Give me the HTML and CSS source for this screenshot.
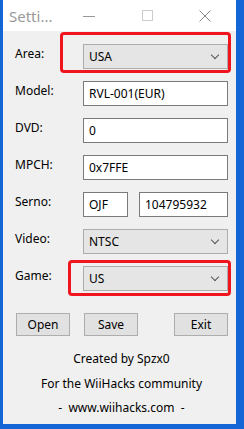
FILE: index.html
```html
<!DOCTYPE html>
<html lang="en">
<head>
  <meta charset="UTF-8">
  <title>Settings</title>
  <link rel="stylesheet" href="styles.css">
</head>
<body>

  <div class="window">
    <div class="titlebar">
      <span class="title">Setti...</span>
      <span class="tb-btn"><svg width="12" height="12" viewBox="0 0 12 12"><path d="M0 6.5h12" stroke="#999" stroke-width="1"/></svg></span>
      <span class="tb-btn"><svg width="12" height="12" viewBox="0 0 12 12"><rect x="1.5" y="0.5" width="10" height="10" fill="none" stroke="#ccc"/></svg></span>
      <span class="tb-btn"><svg width="12" height="12" viewBox="0 0 12 12"><path d="M0.5 0.5l11 11M11.5 0.5l-11 11" stroke="#888" stroke-width="1"/></svg></span>
    </div>

    <div class="content">
      <div class="row">
        <label>Area:</label>
        <div class="combo">USA<span class="arrow"></span>
          <div class="mark mark-area"></div>
        </div>
      </div>
      <div class="row">
        <label>Model:</label>
        <div class="input">RVL-001(EUR)</div>
      </div>
      <div class="row">
        <label>DVD:</label>
        <div class="input">0</div>
      </div>
      <div class="row">
        <label>MPCH:</label>
        <div class="input">0x7FFE</div>
      </div>
      <div class="row">
        <label>Serno:</label>
        <div class="serno">
          <div class="input short">OJF</div>
          <div class="input">104795932</div>
        </div>
      </div>
      <div class="row">
        <label>Video:</label>
        <div class="combo">NTSC<span class="arrow"></span></div>
      </div>
      <div class="row">
        <label>Game:</label>
        <div class="combo">US<span class="arrow"></span>
          <div class="mark mark-game"></div>
        </div>
      </div>

      <div class="buttons">
        <button>Open</button>
        <button>Save</button>
        <button class="exit">Exit</button>
      </div>

      <div class="credits">
        <p>Created by Spzx0</p>
        <p>For the WiiHacks community</p>
        <p>-&nbsp; www.wiihacks.com &nbsp;-</p>
      </div>
    </div>
  </div>

</body>
</html>
```

FILE: styles.css
```css
body { margin: 0; background: #1466d6; font-family: "Noto Sans", sans-serif; font-size: 12px; color: #000; overflow: hidden; }
.window { width: 233px; height: 424px; margin-left: 3px; background: #f0f0f0; display: flex; flex-direction: column; }
.titlebar { height: 31px; background: #fff; display: flex; align-items: center; }
.title { font-size: 15px; color: #9a9a9a; padding-left: 6px; width: 57px; box-sizing: border-box; white-space: nowrap; }
.tb-btn { width: 58px; display: flex; justify-content: center; }
.content { padding: 13px 8px 0 12px; }
.row { display: flex; height: 25px; margin-bottom: 12px; }
.row label { width: 68px; padding-top: 1px; }
.combo, .input { position: relative; flex: 1; height: 25px; box-sizing: border-box; display: flex; align-items: center; padding-left: 5px; }
.combo { background: #e5e5e5; border: 1px solid #adadad; }
.input { background: #fff; border: 1px solid #7a7a7a; }
.arrow { position: absolute; right: 9px; top: 7px; width: 5px; height: 5px; border-right: 1px solid #555; border-bottom: 1px solid #555; transform: rotate(45deg); }
.serno { flex: 1; display: flex; gap: 11px; }
.serno .short { flex: 0 0 45px; }
.mark { position: absolute; border: 3px solid #f0141e; border-radius: 4px; }
.mark-area { left: -24px; right: -4px; top: -13px; bottom: -5px; }
.mark-game { left: -16px; right: -4px; top: -7px; bottom: -6px; }
.buttons { display: flex; gap: 14px; margin-top: 22px; padding-left: 1px; }
.buttons button { width: 54px; height: 23px; background: #e1e1e1; border: 1px solid #adadad; font: inherit; color: #000; padding: 0; }
.buttons .exit { margin-left: 22px; }
.credits { text-align: center; margin-top: 11px; }
.credits p { margin: 0; line-height: 24.5px; }
```
